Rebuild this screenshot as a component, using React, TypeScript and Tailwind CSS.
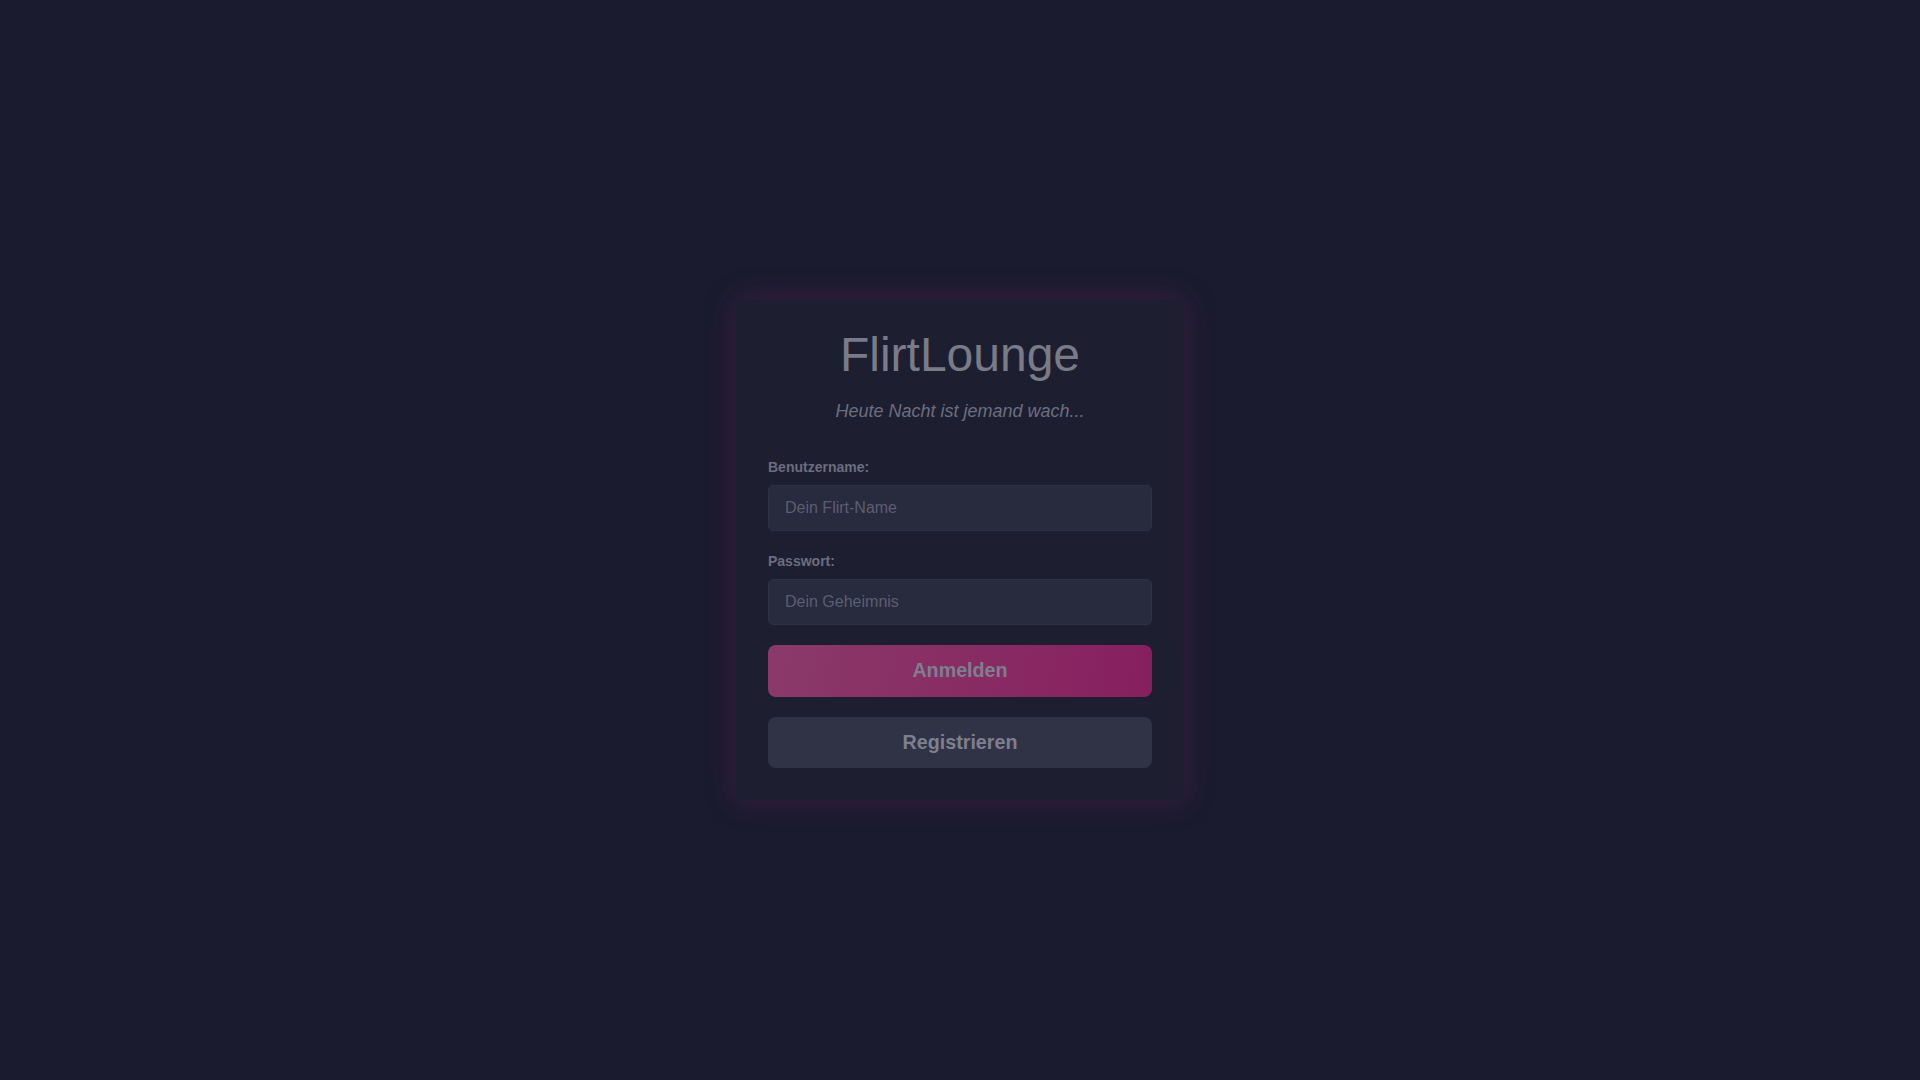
export default function App() {
  return (
    <div className="flex h-[1080px] w-full items-start justify-center bg-[#1a1b2e] pt-[300px] font-['Liberation_Sans',Arial,sans-serif]">
      <div className="w-[448px] rounded-[8px] bg-[#1d1f31] px-8 pb-8 pt-[27px] shadow-[0_0_30px_2px_rgba(125,35,105,0.3)]">
        <h1 className="text-center text-[48px] leading-[56px] text-[#7a7b88]">
          FlirtLounge
        </h1>
        <p className="mt-[17px] text-center text-[18px] italic leading-[22px] text-[#6c6e80]">
          Heute Nacht ist jemand wach...
        </p>

        <form className="mt-[35px]" onSubmit={(e) => e.preventDefault()}>
          <label className="block text-[14px] font-bold leading-5 text-[#6b6d7e]">
            Benutzername:
          </label>
          <input
            type="text"
            placeholder="Dein Flirt-Name"
            className="mt-2 block h-[46px] w-full rounded-[5px] border border-[#2e3043] bg-[#282a3e] px-4 text-[16px] text-[#9a9bab] placeholder:text-[#5c5e70] focus:outline-none"
          />

          <label className="mt-5 block text-[14px] font-bold leading-5 text-[#6b6d7e]">
            Passwort:
          </label>
          <input
            type="password"
            placeholder="Dein Geheimnis"
            className="mt-2 block h-[46px] w-full rounded-[5px] border border-[#2e3043] bg-[#282a3e] px-4 text-[16px] text-[#9a9bab] placeholder:text-[#5c5e70] focus:outline-none"
          />

          <button
            type="submit"
            className="mt-[20px] block h-[52px] w-full rounded-[8px] bg-[linear-gradient(100deg,#8a3a6a_0%,#871f5f_100%)] text-[19.7px] font-bold text-[#7e7f8e]"
          >
            Anmelden
          </button>
          <button
            type="button"
            className="mt-[20px] block h-[51px] w-full rounded-[8px] bg-[#2f3345] text-[19.7px] font-bold text-[#7e7f8e]"
          >
            Registrieren
          </button>
        </form>
      </div>
    </div>
  );
}
